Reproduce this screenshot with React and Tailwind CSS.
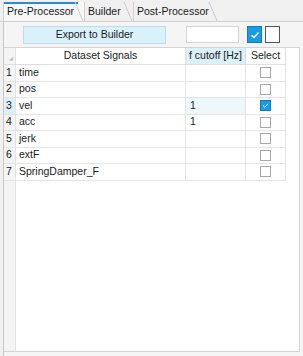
import React from 'react'

const rows = [
    { n: 1, name: 'time', cutoff: '', checked: false },
    { n: 2, name: 'pos', cutoff: '', checked: false },
    { n: 3, name: 'vel', cutoff: '1', checked: true },
    { n: 4, name: 'acc', cutoff: '1', checked: false },
    { n: 5, name: 'jerk', cutoff: '', checked: false },
    { n: 6, name: 'extF', cutoff: '', checked: false },
    { n: 7, name: 'SpringDamper_F', cutoff: '', checked: false },
]

function Tab({ label, active, width }) {
    return (
        <div className={`relative h-full flex items-center pl-[4px] ${width} ${active ? 'bg-[#f7f7f7]' : 'bg-[#f0f0f0]'}`}>
            {active && <div className="absolute left-0 top-0 right-[6px] h-[2px] bg-[#2a8ad4]" />}
            <div className="absolute left-0 top-0 bottom-0 w-px bg-[#d0d0d0]" />
            <span className="relative">{label}</span>
            <svg className="absolute right-0 top-0 h-full w-[10px]" viewBox="0 0 10 20" preserveAspectRatio="none">
                <line x1="1" y1="0" x2="9" y2="20" stroke="#c8c8c8" strokeWidth="1" />
            </svg>
        </div>
    )
}

function Check({ checked, big }) {
    if (checked) {
        return (
            <div className={`${big ? 'w-[15px] h-[17px]' : 'w-[11px] h-[11px]'} bg-[#1a9be6] border border-[#1479b8] flex items-center justify-center`}>
                <svg viewBox="0 0 10 10" className={big ? 'w-[10px] h-[10px]' : 'w-[7px] h-[7px]'}>
                    <path d="M1.5 5.2 L4 7.5 L8.5 2.5" fill="none" stroke="white" strokeWidth="1.4" />
                </svg>
            </div>
        )
    }
    return <div className={`${big ? 'w-[15px] h-[17px] border-[#555]' : 'w-[11px] h-[11px] border-[#a8a8a8]'} bg-white border`} />
}

export default function App() {
    return (
        <div className="w-[303px] h-[356px] bg-[#f0f0f0] text-[10.5px] text-[#1a1a1a] flex flex-col overflow-hidden" style={{ fontFamily: '"Liberation Sans", Arial, sans-serif' }}>
            <div className="h-[22px] pt-[2px] pl-[3px] flex border-b border-[#d0d0d0]">
                <Tab label="Pre-Processor" active width="w-[81px]" />
                <Tab label="Builder" width="w-[49px]" />
                <Tab label="Post-Processor" width="w-[85px]" />
            </div>
            <div className="flex-1 ml-[3px] border-l border-[#c8c8c8] bg-[#f5f5f5] flex flex-col">
                <div className="h-[25px] flex items-center">
                    <button className="ml-[19px] w-[143px] h-[18px] bg-[#d9f1fb] border border-[#c3dbe6] flex items-center justify-center">
                        Export to Builder
                    </button>
                    <div className="ml-[20px] w-[53px] h-[17px] bg-white border border-[#d4d4d4]" />
                    <div className="ml-[8px] flex gap-[3px]">
                        <Check checked big />
                        <Check big />
                    </div>
                </div>
                <div className="h-[305px] w-[296px] bg-white border-t border-r border-b border-[#d4d4d4] flex">
                    <div className="w-[12px] bg-[#f4f4f4] border-r border-[#e2e2e2] flex flex-col">
                        <div className="h-[17px] border-b border-[#dedede] relative">
                            <span className="absolute right-[2px] bottom-[2px] text-[5px] text-[#bbb]">◢</span>
                        </div>
                        {rows.map(r => (
                            <div key={r.n} className={`h-[16.5px] border-b border-[#e4e4e4] flex items-center pl-[2px] ${r.checked ? 'bg-[#dcf0fa]' : ''}`}>
                                {r.n}
                            </div>
                        ))}
                    </div>
                    <div className="flex flex-col">
                        <div className="h-[17px] flex border-b border-[#dedede]">
                            <div className="w-[170px] border-r border-[#dedede] flex items-center justify-center">Dataset Signals</div>
                            <div className="w-[60px] border-r border-[#dedede] bg-[#dcf0fa] flex items-center justify-center">f cutoff [Hz]</div>
                            <div className="w-[40px] border-r border-[#dedede] flex items-center justify-center">Select</div>
                        </div>
                        {rows.map(r => (
                            <div key={r.n} className="h-[16.5px] flex border-b border-[#e4e4e4] w-[270px]">
                                <div className="w-[170px] border-r border-[#e4e4e4] flex items-center pl-[3px]">{r.name}</div>
                                <div className={`w-[60px] border-r border-[#e4e4e4] flex items-center pl-[4px] ${r.checked ? 'bg-[#eef8fc]' : ''}`}>{r.cutoff}</div>
                                <div className="w-[40px] border-r border-[#e4e4e4] flex items-center justify-center">
                                    <Check checked={r.checked} />
                                </div>
                            </div>
                        ))}
                    </div>
                </div>
            </div>
        </div>
    )
}
